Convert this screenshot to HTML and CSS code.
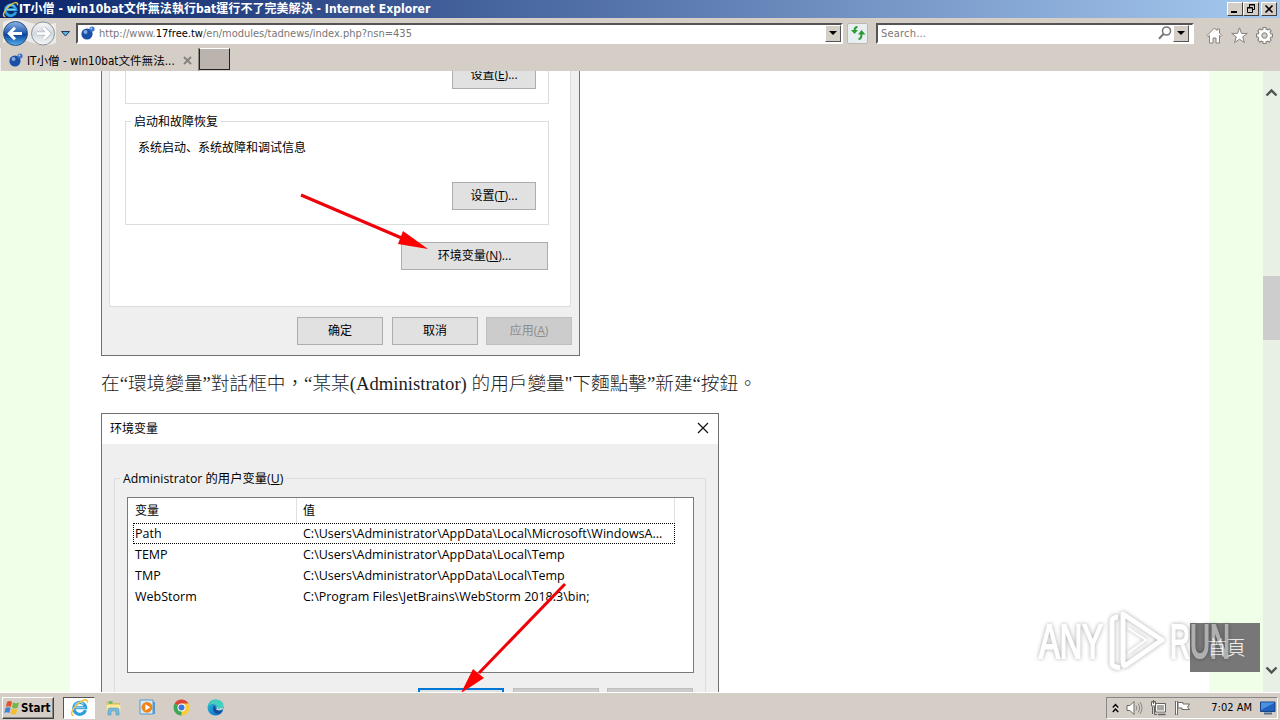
FILE: index.html
```html
<!DOCTYPE html>
<html lang="zh-TW">
<head>
  <meta charset="UTF-8">
  <title>IT小僧 - win10bat文件無法執行bat運行不了完美解決</title>
  <link rel="stylesheet" href="styles.css">
</head>
<body>
  <svg width="0" height="0" class="defs">
    <defs>
      <linearGradient id="blueBall" x1="0" y1="0" x2="0" y2="1">
        <stop offset="0" stop-color="#8fb5e4"/>
        <stop offset=".45" stop-color="#2862b4"/>
        <stop offset=".55" stop-color="#0d4499"/>
        <stop offset="1" stop-color="#51b4f2"/>
      </linearGradient>
      <linearGradient id="greyBall" x1="0" y1="0" x2="0" y2="1">
        <stop offset="0" stop-color="#f8f8f8"/>
        <stop offset=".5" stop-color="#d3d9df"/>
        <stop offset="1" stop-color="#f4f7f9"/>
      </linearGradient>
      <linearGradient id="edgeFill" x1="0" y1="0" x2="1" y2="1">
        <stop offset="0" stop-color="#35c1b1"/>
        <stop offset=".5" stop-color="#1b8fd8"/>
        <stop offset="1" stop-color="#0c59a4"/>
      </linearGradient>
      <symbol id="ie" viewBox="0 0 18 18">
        <path d="M14.600 11.500A5.600 5.600 0 1 1 14.800 9.200H5" fill="none" stroke="#2a9fe0" stroke-width="3"/>
        <path d="M14.300 9.200H5M4.500 7A5 5 0 0 1 13 6" fill="none" stroke="#a5dcf8" stroke-width="1"/>
        <path d="M3.500 16.500C-.5 16.500 2 10 8 5C12.500 1 17.500 .5 16.300 4.500" fill="none" stroke="#f0c343" stroke-width="1.500"/>
      </symbol>
      <symbol id="favicon" viewBox="0 0 14 14">
        <circle cx="6" cy="8" r="5.600" fill="#1b4fa5"/>
        <circle cx="4.500" cy="6" r="2" fill="#7fa8e4"/>
        <circle cx="11" cy="3" r="2.600" fill="#3b74c9"/>
        <circle cx="10.400" cy="2.400" r=".9" fill="#b7d1f5"/>
      </symbol>
    </defs>
  </svg>

  <header class="titlebar">
    <svg class="ie-logo" width="17" height="17"><use href="#ie"/></svg>
    <h1>IT小僧 - win10bat文件無法執行bat運行不了完美解決 - Internet Explorer</h1>
    <div class="win-buttons">
      <span class="win-btn"><svg width="12" height="10"><path d="M2 8h6" stroke="#000" stroke-width="2"/></svg></span>
      <span class="win-btn"><svg width="12" height="10"><path d="M4.500 3V.5h5v5H8M4 1h6M2 4h5.500M2.500 3.500h5v5h-5z" fill="none" stroke="#000"/></svg></span>
      <span class="win-btn close"><svg width="12" height="10"><path d="M2.500 1.500l7 7m0-7l-7 7" stroke="#000" stroke-width="1.600"/></svg></span>
    </div>
  </header>

  <nav class="navbar">
    <svg class="history" width="72" height="30" viewBox="0 0 72 30">
      <path d="M3 4Q15-1 28 4T56 5V25Q44 30 30 24T3 25z" fill="#eceae6"/>
      <circle cx="15.500" cy="15.500" r="12" fill="url(#blueBall)" stroke="#31527f"/>
      <path d="M22 15.500H10M15 9.800l-5.700 5.700 5.700 5.700" fill="none" stroke="#fff" stroke-width="3"/>
      <circle cx="43" cy="15.500" r="11.500" fill="url(#greyBall)" stroke="#8c9298"/>
      <path d="M37 15.500h11M43.500 10l5.500 5.500-5.500 5.500" fill="none" stroke="#b5bac0" stroke-width="4.200"/>
      <path d="M37 15.500h11M43.500 10l5.500 5.500-5.500 5.500" fill="none" stroke="#fff" stroke-width="2.600"/>
      <path d="M61.500 13.500h8L65.500 18z" fill="#5cb5e0" stroke="#183b66"/>
    </svg>
    <div class="field address">
      <svg width="14" height="14"><use href="#favicon"/></svg>
      <span class="url">http://www.<b>17free.tw</b>/en/modules/tadnews/index.php?nsn=435</span>
      <span class="drop"></span>
    </div>
    <span class="refresh">
      <svg width="16" height="16" viewBox="0 0 16 16"><path d="M7.500 2Q4.500 2 4.500 6M8.500 14Q11.500 14 11.500 9" fill="none" stroke="#2b9a37" stroke-width="2"/><path d="M1 5h7L4.500 9zM8 9.500h7.500L11.500 5z" fill="#2b9a37"/></svg>
    </span>
    <div class="field search">
      <span class="hint">Search...</span>
      <svg width="14" height="14" viewBox="0 0 14 14"><circle cx="8.500" cy="5" r="4" fill="none" stroke="#777" stroke-width="1.600"/><path d="M5.800 7.800L1 12.800" stroke="#777" stroke-width="2"/></svg>
      <span class="drop"></span>
    </div>
    <div class="tools">
      <svg width="17" height="17" viewBox="0 0 17 17"><path d="M1 8.500L8.500 1l2.500 2.500V2h2.500v4L16 8.500l-1 1-1.500-1V16H10v-5H7v5H3.500V8.500L2 9.500z" fill="#fff" stroke="#85817b"/></svg>
      <svg width="17" height="17" viewBox="0 0 17 17"><path d="M8.500 .8l2 5.600h5.800l-4.600 3.500 1.700 5.800-4.900-3.500-4.900 3.500 1.700-5.800L.7 6.400h5.800z" fill="#fff" stroke="#85817b"/></svg>
      <svg width="17" height="17" viewBox="0 0 17 17"><g fill="none"><path d="M8.500 0v17M0 8.500h17M2.500 2.500l12 12M14.500 2.500l-12 12" stroke="#85817b" stroke-width="4"/><circle cx="8.500" cy="8.500" r="4.600" stroke="#85817b" stroke-width="5"/><path d="M8.500 1v15M1 8.500h15M3.200 3.200l10.600 10.600M13.800 3.200L3.200 13.800" stroke="#fff" stroke-width="2"/><circle cx="8.500" cy="8.500" r="4.600" stroke="#fff" stroke-width="3"/></g><circle cx="8.500" cy="8.500" r="2.700" fill="#d5cec7" stroke="#85817b"/></svg>
    </div>
  </nav>

  <div class="tabs">
    <div class="tab">
      <svg width="14" height="14"><use href="#favicon"/></svg>
      <span class="tab-title">IT小僧 - win10bat文件無法...</span>
      <svg width="9" height="9"><path d="M1 1l7 7m0-7L1 8" stroke="#85817b" stroke-width="1.800"/></svg>
    </div>
    <span class="new-tab"></span>
  </div>

  <div class="viewport">
    <main class="page">
      <section class="dialog system" lang="zh-CN">
        <div class="panel">
          <div class="group first">
            <span class="btn">设置(<u>E</u>)...</span>
          </div>
          <div class="group startup">
            <span class="legend">启动和故障恢复</span>
            <p>系统启动、系统故障和调试信息</p>
            <span class="btn">设置(<u>T</u>)...</span>
          </div>
          <span class="btn env">环境变量(<u>N</u>)...</span>
        </div>
        <div class="actions">
          <span class="btn">确定</span>
          <span class="btn">取消</span>
          <span class="btn disabled">应用(<u>A</u>)</span>
        </div>
        <svg class="arrow arrow-env" width="130" height="60"><path d="M1 2L104 46" stroke="#f00008" stroke-width="3"/><path d="M103 38l25 18-30-5z" fill="#f00"/></svg>
      </section>

      <p class="text">在“環境變量”對話框中，“某某(Administrator) 的用戶變量"下麵點擊”新建“按鈕。</p>

      <section class="dialog variables" lang="zh-CN">
        <div class="dialog-head">
          <span>环境变量</span>
          <svg width="12" height="12"><path d="M1 1l10 10m0-10L1 11" stroke="#111" stroke-width="1.200"/></svg>
        </div>
        <div class="group user">
          <span class="legend">Administrator 的用户变量(<u>U</u>)</span>
          <div class="list">
            <div class="row head"><span>变量</span><span>值</span></div>
            <div class="row focus"><span>Path</span><span>C:\Users\Administrator\AppData\Local\Microsoft\WindowsA...</span></div>
            <div class="row"><span>TEMP</span><span>C:\Users\Administrator\AppData\Local\Temp</span></div>
            <div class="row"><span>TMP</span><span>C:\Users\Administrator\AppData\Local\Temp</span></div>
            <div class="row"><span>WebStorm</span><span>C:\Program Files\JetBrains\WebStorm 2018.3\bin;</span></div>
          </div>
          <div class="actions">
            <span class="btn default"></span>
            <span class="btn disabled"></span>
            <span class="btn disabled"></span>
          </div>
        </div>
        <svg class="arrow arrow-new" width="106" height="112"><path d="M104 3L18 92" stroke="#f00008" stroke-width="3"/><path d="M0 112L12 88l11 9z" fill="#f00"/></svg>
      </section>
    </main>
    <div class="scrollbar">
      <svg width="13" height="9"><path d="M1.500 7.500l5-5 5 5" fill="none" stroke="#4d564d" stroke-width="2.400"/></svg>
      <span class="thumb"></span>
      <svg width="13" height="9"><path d="M1.500 1.500l5 5 5-5" fill="none" stroke="#4d564d" stroke-width="2.400"/></svg>
    </div>
    <span class="home">首頁</span>
    <svg class="watermark" width="204" height="70">
      <g fill="#fff" stroke="#fff" stroke-width="2">
        <text x="5" y="50" textLength="64" lengthAdjust="spacingAndGlyphs">ANY</text>
        <text x="136" y="50" textLength="60" lengthAdjust="spacingAndGlyphs">RUN</text>
        <path d="M84 9q-6 0-6 5v41q0 3 4 4l4 1" fill="none" stroke-width="5"/>
        <path d="M89 53V6l39 26-36 25q-3 2-3-4z" fill="none" stroke-width="5" stroke-linejoin="round"/>
        <path d="M94 20l18 12-18 13" fill="none" stroke-width="2"/>
      </g>
    </svg>
  </div>

  <footer class="taskbar">
    <span class="start">
      <svg width="16" height="16" viewBox="0 0 16 16"><path d="M3 2q3-2 5 0L6.800 7q-2.500-1.500-5 0z" fill="#e5532d"/><path d="M9 2.500q3 1.500 6 0L13.500 8q-3 1-5.500-.5z" fill="#76b743"/><path d="M1.500 8q2.500-1.500 5 0l-1.200 5q-2.500-1.500-5 0z" fill="#3e83d5"/><path d="M7.600 8.500q3 1.500 5.700.5L12 14q-3 1-5.500-.5z" fill="#f6bd2a"/></svg>
      Start
    </span>
    <div class="apps">
      <span class="app active"><svg width="19" height="19"><use href="#ie"/></svg></span>
      <span class="app"><svg width="17" height="17" viewBox="0 0 17 17"><path d="M2 3h5l1 1.500h6.500V12H2z" fill="#f3d36e" stroke="#cfae49" stroke-width=".6"/><path d="M3.500 2h4v3h-4z" fill="#75bb6c"/><path d="M1.500 6h14v6.500h-14z" fill="#fbe9a0"/><path d="M3 16v-5q0-2 2-2h7q2 0 2 2v5h-3v-4H6v4z" fill="#75b9dd" stroke="#4a8fb8" stroke-width=".5"/></svg></span>
      <span class="app"><svg width="17" height="17" viewBox="0 0 17 17"><path d="M1 1h13v14H1z" fill="#d6e8f6" stroke="#5598cc"/><path d="M14 3h2v12h-2z" fill="#5598cc"/><circle cx="8" cy="8.300" r="5.400" fill="#ef8317"/><path d="M6.300 5.200v6.300l5-3.200z" fill="#fff"/></svg></span>
      <span class="app"><svg width="17" height="17" viewBox="0 0 17 17"><path d="M8.500 8.500L1.600 4.500A8 8 0 0 1 15.400 4.500z" fill="#dd4337"/><path d="M8.500 8.500L1.600 4.500A8 8 0 0 0 8.500 16.500L12 10z" fill="#3fa655"/><path d="M8.500 8.500V4.500h6.900A8 8 0 0 1 8.500 16.500z" fill="#f9cb38"/><circle cx="8.500" cy="8.500" r="4" fill="#fff"/><circle cx="8.500" cy="8.500" r="3" fill="#3a78dc"/></svg></span>
      <span class="app"><svg width="17" height="17" viewBox="0 0 17 17"><circle cx="8.500" cy="8.500" r="8" fill="url(#edgeFill)"/><path d="M1 7Q4 .5 9.500.6q7 .6 7 6.400-.5 3.500-5 3.500-2-.4-1-2Q9 4.500 5 5 2 5.500 1 7z" fill="#43cfc0"/><path d="M6 9q0 4.500 4 5.500 3 .3 5-2l-.4-.6Q10 13 8.500 9q0-2-1-2.200Q6 7 6 9z" fill="#154d95"/><path d="M9 7.500q2 2-.2 3 3 1.500 6.800 0l.5-2-4.500 1.500q-1.500-.5-.8-1.800z" fill="#d6d0ca"/></svg></span>
    </div>
    <div class="tray">
      <svg width="7" height="10"><path d="M.8 4.500L3.500 1.500l2.700 3M.8 9L3.500 6l2.700 3" fill="none" stroke="#000" stroke-width="1.300"/></svg>
      <svg width="17" height="16" viewBox="0 0 17 16"><path d="M1 5.500h3l4-4v13l-4-4H1z" fill="#fff" stroke="#6e6b66"/><path d="M10 5.500q1.800 2.500 0 5M12 3.500q3.300 4.500 0 9M14 2q4 6 0 12" fill="none" stroke="#8c8882"/></svg>
      <svg width="17" height="16" viewBox="0 0 17 16"><path d="M5.500 3.500h10v8.500h-10z" fill="#aaa7a2" stroke="#66625d"/><path d="M6.500 4.500h8V11h-8z" fill="none" stroke="#fff"/><path d="M8 14.500h7.500" stroke="#66625d" stroke-width="1.500"/><path d="M1.500 1.500h4V6l-1 1v7.500H7M2.500 7v7" fill="none" stroke="#66625d"/><path d="M1.500 2h4v4h-4z" fill="#fff" stroke="#66625d"/><path d="M3.500 0v4" stroke="#66625d"/></svg>
      <svg width="17" height="16" viewBox="0 0 17 16"><path d="M2.500 1v14" stroke="#6e6b66" stroke-width="3"/><path d="M2.500 1.500v13" stroke="#fff"/><path d="M4 2.500h5V4h6.500l-2 3 2 2.500H8V8H4z" fill="#fff" stroke="#6e6b66"/></svg>
      <time>7:02 AM</time>
      <svg width="16" height="14" viewBox="0 0 16 14"><path d="M.5 1h14.500v9.500H.5z" fill="#2160bd" stroke="#174583"/><path d="M1 1.500h14L1 9z" fill="#4b91df"/><path d="M4 12.500h8" stroke="#516e91" stroke-width="2"/></svg>
    </div>
  </footer>
</body>
</html>
```
FILE: styles.css
```css
:root {
  --chrome: #d5cec7;
  --green: #f0ffe8;
  --ui: "DejaVu Sans Condensed", "Noto Sans CJK TC", sans-serif;
  --yahei: "Open Sans", "Noto Sans CJK SC", sans-serif;
}

* {
  box-sizing: border-box;
}

body {
  display: flex;
  flex-direction: column;
  width: 1280px;
  height: 720px;
  margin: 0;
  overflow: hidden;
  background: var(--chrome);
  font-family: var(--ui);
  font-size: 11px;
  color: #000;
}

svg {
  display: block;
  flex: none;
}

.defs {
  position: absolute;
}

/* Title bar */
.titlebar {
  display: flex;
  align-items: center;
  height: 18px;
  flex: none;
  padding: 0 3px 0 2px;
  background: linear-gradient(to right, #0a246a, #a6caf0);
}

.titlebar h1 {
  flex: 1;
  margin: 0;
  font-size: 12px;
  line-height: 18px;
  color: #fff;
  white-space: nowrap;
  letter-spacing: 0.05px;
}

.win-buttons {
  display: flex;
}

.win-btn {
  display: flex;
  align-items: center;
  justify-content: center;
  width: 16px;
  height: 14px;
  background: var(--chrome);
  border: 1px solid;
  border-color: #fff #404040 #404040 #fff;
}

.win-btn.close {
  margin-left: 2px;
}

/* Navigation row */
.navbar {
  display: flex;
  align-items: center;
  height: 30px;
  flex: none;
  padding-right: 7px;
}

.field {
  display: flex;
  align-items: center;
  height: 21px;
  background: #fff;
  border: 2px solid;
  border-color: #555 #fff #fff #555;
}

.address {
  width: 767px;
  margin-left: 4px;
  padding-left: 3px;
}

.url {
  flex: 1;
  margin-left: 4px;
  color: #777;
}

.url b {
  font-weight: normal;
  color: #000;
}

.drop {
  display: flex;
  align-items: center;
  justify-content: center;
  width: 16px;
  height: 17px;
  background: var(--chrome);
  border: 1px solid;
  border-color: #fff #555 #555 #fff;
}

.drop::after {
  content: "";
  border: 4px solid transparent;
  border-top-color: #000;
  border-bottom: 0;
}

.refresh {
  display: flex;
  align-items: center;
  justify-content: center;
  width: 21px;
  height: 21px;
  margin: 0 8px 0 4px;
  background: #e9eef0;
  border: 1px solid #bdb8b2;
  border-radius: 2px;
}

.search {
  width: 318px;
  padding: 0 3px;
}

.hint {
  flex: 1;
  color: #777;
  letter-spacing: 0.2px;
}

.search .drop {
  margin-left: 1px;
}

.tools {
  display: flex;
  gap: 8px;
  margin: 4px 0 0 auto;
}

/* Tabs */
.tabs {
  display: flex;
  height: 23px;
  flex: none;
}

.tab {
  display: flex;
  align-items: center;
  width: 199px;
  padding: 1px 6px 0 8px;
  border-right: 1px solid #8a857e;
  border-left: 1px solid #eee;
}

.tab-title {
  flex: 1;
  margin-left: 4px;
  font-size: 11.6px;
  white-space: nowrap;
}

.new-tab {
  width: 31px;
  height: 22px;
  background: #bbb3ad;
  border: 1px solid;
  border-color: #fff #222 #222 #222;
}

/* Page */
.viewport {
  position: relative;
  display: flex;
  height: 621px;
  flex: none;
  overflow: hidden;
  background: var(--green);
}

.page {
  width: 1139px;
  margin-left: 70px;
  padding-left: 31px;
  background: #fff;
}

.dialog {
  position: relative;
  display: flex;
  flex-direction: column;
  background: #efefef;
  border: 1px solid #717171;
  font-family: var(--yahei);
  font-size: 12px;
}

.system {
  width: 479px;
  height: 285px;
  padding: 0 7px;
  border-top: 0;
}

.panel {
  display: flex;
  flex-direction: column;
  width: 462px;
  height: 236px;
  padding: 0 21px 0 15px;
  background: #fff;
  border: 1px solid #dcdcdc;
  border-top: 0;
}

.group {
  position: relative;
  display: flex;
  flex-direction: column;
  border: 1px solid #dcdcdc;
}

.legend {
  position: absolute;
  top: -10px;
  left: 5px;
  padding: 0 3px;
  line-height: 20px;
  background: #fff;
}

.btn {
  display: flex;
  align-items: center;
  justify-content: center;
  width: 86px;
  height: 28px;
  padding-bottom: 2px;
  background: #e1e1e1;
  border: 1px solid #adadad;
}

.btn.disabled {
  color: #8d8d8d;
  background: #ccc;
  border-color: #bfbfbf;
}

.btn.default {
  border: 2px solid #0078d7;
}

.first {
  height: 33px;
  border-top: 0;
}

.first .btn,
.startup .btn {
  width: 84px;
  margin-right: 12px;
  align-self: flex-end;
}

.first .btn {
  margin-top: -10px;
}

.startup {
  height: 104px;
  margin-top: 17px;
}

.startup p {
  margin: 16px 0 24px 12px;
  line-height: 20px;
}

.env {
  width: 147px;
  margin: 17px 1px 0 0;
  align-self: flex-end;
}

.actions {
  display: flex;
  justify-content: flex-end;
  gap: 8px;
}

.system .actions {
  margin: 10px 0 0;
}

.system .actions .btn:first-child {
  margin-right: 1px;
}

.arrow {
  position: absolute;
}

.arrow-env {
  top: 122px;
  left: 198px;
}

.text {
  margin: 14px 0 15px;
  font-family: "Liberation Serif", "Noto Sans CJK TC", serif;
  font-size: 18.67px;
  font-weight: 300;
  line-height: 28px;
  color: #1c1c1c;
  white-space: nowrap;
}

.variables {
  width: 618px;
  height: 400px;
}

.dialog-head {
  display: flex;
  align-items: center;
  justify-content: space-between;
  height: 30px;
  padding: 0 9px 2px 8px;
  background: #fff;
}

.user {
  height: 300px;
  margin: 34px 12px 0;
  padding: 18px 11px 0 12px;
}

.user .legend {
  background: #efefef;
  font-size: 12.3px;
}

.list {
  height: 176px;
  padding-left: 5px;
  background: #fff;
  border: 1px solid #7a7a7a;
}

.row {
  display: flex;
  align-items: center;
  width: 542px;
  height: 21px;
  border: 1px solid transparent;
  font-size: 12.5px;
  white-space: nowrap;
}

.row span:first-child {
  width: 169px;
  padding-left: 1px;
}

.row.head {
  height: 25px;
  padding-bottom: 1px;
  font-size: 12px;
  border-width: 0 1px;
  border-right-color: #e0e0e0;
  background: linear-gradient(#e0e0e0, #e0e0e0) 162px 0 / 1px 100% no-repeat;
}

.row.focus {
  border: 1px dotted #000;
}

.user .actions {
  margin: 15px 1px 0 0;
}

.user .actions .btn:first-child {
  margin-right: 1px;
}

.arrow-new {
  top: 167px;
  left: 359px;
}

.scrollbar {
  display: flex;
  flex-direction: column;
  align-items: center;
  width: 17px;
  margin-left: auto;
  padding: 17px 0;
  background: #e8f0e5;
}

.thumb {
  width: 17px;
  height: 64px;
  margin: 179px 0 auto;
  background: #cdcdcd;
}

.home {
  position: absolute;
  top: 552px;
  left: 1190px;
  width: 70px;
  height: 49px;
  padding-left: 3px;
  background: #777;
  color: #fff;
  font-family: "Noto Sans CJK TC", sans-serif;
  font-size: 19px;
  font-weight: 300;
  line-height: 47px;
  text-align: center;
}

.watermark {
  position: absolute;
  top: 537px;
  left: 1034px;
  font-family: "Liberation Sans", sans-serif;
  font-size: 48px;
  opacity: 0.42;
  filter: drop-shadow(0 0 2px rgba(0, 0, 0, 0.8));
}

/* Taskbar */
.taskbar {
  display: flex;
  align-items: center;
  height: 28px;
  flex: none;
  padding: 2px 2px 0;
  border-top: 1px solid #fff;
}

.start {
  display: flex;
  align-items: center;
  gap: 1px;
  width: 52px;
  height: 22px;
  padding-left: 1px;
  border: 1px solid;
  border-color: #fff #404040 #404040 #fff;
  box-shadow: inset -1px -1px #888;
  font-weight: bold;
  font-size: 11.5px;
}

.apps {
  display: flex;
  gap: 2px;
  margin-left: 9px;
}

.app {
  display: flex;
  align-items: center;
  justify-content: center;
  width: 32px;
  height: 22px;
}

.app.active {
  background: #fff;
  border: 1px solid;
  border-color: #555 #fff #fff #555;
}

.tray {
  display: flex;
  align-items: center;
  gap: 7px;
  width: 172px;
  height: 22px;
  margin-left: auto;
  padding: 0 1px 0 5px;
  border: 1px solid;
  border-color: #888 #fff #fff #888;
}

.tray time {
  margin: 0 1px 0 auto;
  font-size: 11px;
  white-space: nowrap;
}
```
